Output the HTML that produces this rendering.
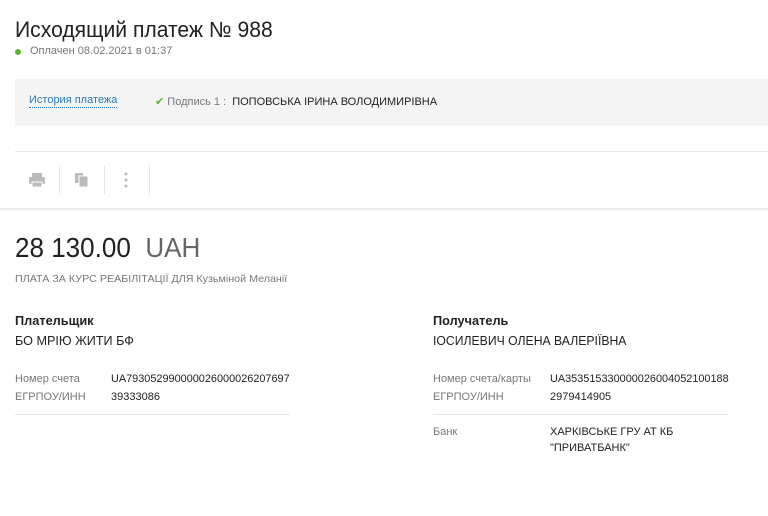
<!DOCTYPE html>
<html><head><meta charset="utf-8"><style>
body{margin:0;width:768px;height:516px;background:#fff;font-family:"Liberation Sans",sans-serif;color:#222;position:relative;overflow:hidden}
.a{position:absolute;white-space:nowrap}
.n{display:inline-block;transform-origin:0 50%}
.lbl{color:#777;font-size:11px}
.val{color:#222;font-size:11px}
</style></head><body>
<div class="a" style="left:15px;top:17px;font-size:22px;color:#222"><span class="n" style="transform:scaleX(.96)">Исходящий платеж № 988</span></div>
<div class="a" style="left:15px;top:49px;width:6px;height:6px;border-radius:50%;background:#5cb531"></div>
<div class="a" style="left:30px;top:45px;font-size:11px;color:#777"><span class="n">Оплачен 08.02.2021 в 01:37</span></div>
<div class="a" style="left:15px;top:79px;width:753px;height:47px;background:#f4f4f4"></div>
<div class="a" style="left:29px;top:93px;font-size:11px;color:#2a7ab8;border-bottom:1px dotted #2a7ab8;line-height:14px"><span class="n">История платежа</span></div>
<div class="a" style="left:155px;top:95px;font-size:11px;color:#777"><span style="color:#5cb531">✔</span> <span class="n">Подпись 1 :&nbsp; <span style="color:#222">ПОПОВСЬКА ІРИНА ВОЛОДИМИРІВНА</span></span></div>
<div class="a" style="left:15px;top:151px;width:753px;height:1px;background:#e6e6e6"></div>
<svg class="a" style="left:28px;top:172px" width="18" height="16" viewBox="0 0 18 16"><rect x="4" y="1" width="10" height="4" fill="#bbb"/><rect x="1" y="5" width="16" height="7" rx="1.5" fill="#bbb"/><rect x="4" y="10" width="10" height="5" fill="#bbb" stroke="#fff" stroke-width="1"/></svg>
<div class="a" style="left:59px;top:166px;width:1px;height:28px;background:#e6e6e6"></div>
<svg class="a" style="left:74px;top:172px" width="16" height="16"><rect x="1" y="1" width="8" height="10" fill="#bbb"/><rect x="5" y="4" width="9" height="11" fill="#bbb" stroke="#fff"/></svg>
<div class="a" style="left:104px;top:166px;width:1px;height:28px;background:#e6e6e6"></div>
<svg class="a" style="left:124px;top:172px" width="4" height="16"><circle cx="2" cy="2" r="1.5" fill="#bbb"/><circle cx="2" cy="8" r="1.5" fill="#bbb"/><circle cx="2" cy="14" r="1.5" fill="#bbb"/></svg>
<div class="a" style="left:149px;top:166px;width:1px;height:28px;background:#e6e6e6"></div>
<div class="a" style="left:0;top:208px;width:768px;height:3px;background:linear-gradient(#e2e2e2,#fff)"></div>
<div class="a" style="left:15px;top:232px;font-size:28px;color:#222"><span class="n" style="transform:scaleX(.93)">28 130.00 <span style="color:#666">&nbsp;UAH</span></span></div>
<div class="a" style="left:15px;top:273px;font-size:10.5px;color:#777"><span class="n" style="transform:scaleX(1.02)">ПЛАТА ЗА КУРС РЕАБІЛІТАЦІЇ ДЛЯ Кузьміной Меланії</span></div>
<div class="a" style="left:15px;top:313px;font-size:13px;color:#222;font-weight:bold"><span class="n" style="transform:scaleX(.98)">Плательщик</span></div>
<div class="a" style="left:15px;top:333px;font-size:13px;color:#222"><span class="n" style="transform:scaleX(.97)">БО МРІЮ ЖИТИ БФ</span></div>
<div class="a lbl" style="left:15px;top:373px"><span class="n">Номер счета</span></div>
<div class="a val" style="left:111px;top:373px"><span class="n" style="transform:scaleX(.99)">UA793052990000026000026207697</span></div>
<div class="a lbl" style="left:15px;top:391px"><span class="n">ЕГРПОУ/ИНН</span></div>
<div class="a val" style="left:111px;top:391px"><span class="n">39333086</span></div>
<div class="a" style="left:15px;top:414px;width:275px;height:1px;background:#e6e6e6"></div>
<div class="a" style="left:433px;top:313px;font-size:13px;color:#222;font-weight:bold"><span class="n" style="transform:scaleX(.98)">Получатель</span></div>
<div class="a" style="left:433px;top:333px;font-size:13px;color:#222"><span class="n" style="transform:scaleX(.94)">ІОСИЛЕВИЧ ОЛЕНА ВАЛЕРІЇВНА</span></div>
<div class="a lbl" style="left:433px;top:373px"><span class="n">Номер счета/карты</span></div>
<div class="a val" style="left:550px;top:373px"><span class="n" style="transform:scaleX(.99)">UA353515330000026004052100188</span></div>
<div class="a lbl" style="left:433px;top:391px"><span class="n">ЕГРПОУ/ИНН</span></div>
<div class="a val" style="left:550px;top:391px"><span class="n">2979414905</span></div>
<div class="a" style="left:433px;top:414px;width:295px;height:1px;background:#e6e6e6"></div>
<div class="a lbl" style="left:433px;top:426px"><span class="n">Банк</span></div>
<div class="a val" style="left:550px;top:426px"><span class="n">ХАРКІВСЬКЕ ГРУ АТ КБ</span></div>
<div class="a val" style="left:550px;top:442px"><span class="n">"ПРИВАТБАНК"</span></div>
</body></html>
